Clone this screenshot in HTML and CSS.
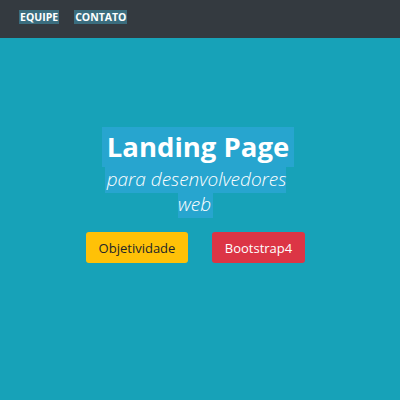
FILE: index.html
```html
<!DOCTYPE html>
<html lang="pt">
<head>
<meta charset="utf-8">
<title>Landing Page</title>
<link rel="stylesheet" href="styles.css">
</head>
<body>
<nav class="navbar">
  <a class="nav-link" href="#">EQUIPE</a>
  <a class="nav-link" href="#">CONTATO</a>
</nav>
<main class="hero">
  <h1 class="title">Landing Page</h1>
  <p class="subtitle"><span class="subtitle-text">para desenvolvedores web</span></p>
  <div class="actions">
    <a class="btn btn-warning" href="#">Objetividade</a>
    <a class="btn btn-danger" href="#">Bootstrap4</a>
  </div>
</main>
</body>
</html>
```
FILE: styles.css
```css
html, body {
  margin: 0;
  padding: 0;
  height: 100%;
}
body {
  font-family: "Open Sans", "Noto Sans", sans-serif;
  background: #17a2b8;
  display: flex;
  flex-direction: column;
}
.navbar {
  height: 38px;
  background: #343a40;
  display: flex;
  align-items: center;
  padding-left: 19px;
  gap: 15px;
  box-sizing: border-box;
}
.nav-link {
  color: #fff;
  text-decoration: none;
  font-weight: 700;
  font-size: 10.5px;
  line-height: 14px;
  background: #3b6d7e;
  padding: 0 1px;
  margin-top: -5px;
}
.hero {
  flex: 1;
  display: flex;
  flex-direction: column;
  align-items: center;
  padding-top: 89px;
}
.title {
  margin: 0 0 0 -4px;
  font-size: 27.5px;
  font-weight: 700;
  color: #fff;
  line-height: 40px;
  background: #27a5cf;
  padding: 0 5px;
}
.subtitle {
  margin: 0 0 0 -9px;
  width: 196px;
  font-size: 19px;
  font-weight: 300;
  font-style: italic;
  color: #fff;
  line-height: 25px;
  text-align: center;
}
.subtitle-text {
  background: #27a5cf;
  padding: 3px 2px 1px;
}
.actions {
  display: flex;
  gap: 24px;
  margin-top: 15px;
  margin-right: 9px;
}
.btn {
  display: inline-flex;
  align-items: center;
  justify-content: center;
  height: 31px;
  padding: 0 12px;
  font-size: 13px;
  border-radius: 3px;
  text-decoration: none;
  box-sizing: border-box;
}
.btn-warning {
  background: #ffc107;
  color: #212529;
  width: 102px;
}
.btn-danger {
  background: #dc3545;
  color: #fff;
  width: 93px;
}
```
